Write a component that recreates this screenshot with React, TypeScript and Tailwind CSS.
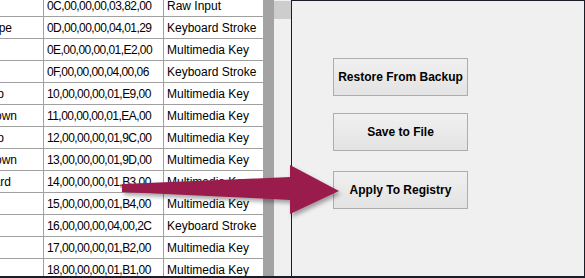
import React from "react";

type Row = { label: string; pad: string; hex: string; type: string };

const rows: Row[] = [
  { label: "", pad: "", hex: "0C,00,00,00,03,82,00", type: "Raw Input" },
  { label: "Escape", pad: "pr-[31px]", hex: "0D,00,00,00,04,01,29", type: "Keyboard Stroke" },
  { label: "", pad: "", hex: "0E,00,00,00,01,E2,00", type: "Multimedia Key" },
  { label: "", pad: "", hex: "0F,00,00,00,04,00,06", type: "Keyboard Stroke" },
  { label: "Volume Up", pad: "pr-[39px]", hex: "10,00,00,00,01,E9,00", type: "Multimedia Key" },
  { label: "Volume Down", pad: "pr-[26px]", hex: "11,00,00,00,01,EA,00", type: "Multimedia Key" },
  { label: "Channel Up", pad: "pr-[39px]", hex: "12,00,00,00,01,9C,00", type: "Multimedia Key" },
  { label: "Channel Down", pad: "pr-[26px]", hex: "13,00,00,00,01,9D,00", type: "Multimedia Key" },
  { label: "Fast Forward", pad: "pr-[32px]", hex: "14,00,00,00,01,B3,00", type: "Multimedia Key" },
  { label: "", pad: "", hex: "15,00,00,00,01,B4,00", type: "Multimedia Key" },
  { label: "", pad: "", hex: "16,00,00,00,04,00,2C", type: "Keyboard Stroke" },
  { label: "", pad: "", hex: "17,00,00,00,01,B2,00", type: "Multimedia Key" },
  { label: "", pad: "", hex: "18,00,00,00,01,B1,00", type: "Multimedia Key" },
];

function Btn({ children, className }: { children: React.ReactNode; className?: string }) {
  return (
    <div
      className={
        "w-[135px] h-[38px] flex items-center justify-center border border-[#adadad] bg-gradient-to-b from-[#f0f0f0] to-[#e3e3e3] text-[12px] font-bold text-black " +
        (className ?? "")
      }
    >
      {children}
    </div>
  );
}

export default function App() {
  return (
    <div
      className="relative w-[585px] h-[278px] overflow-hidden bg-white"
      style={{ fontFamily: '"Liberation Sans", Arial, sans-serif' }}
    >
      <div className="flex h-[276px]">
        {/* table */}
        <div className="w-[263px] h-full overflow-hidden bg-white">
          <div className="-mt-[5px]">
            {rows.map((r, i) => (
              <div key={i} className="flex h-[22px] border-b border-[#a0a0a0] text-[12px] text-black">
                <div className="w-[44px] shrink-0 border-r border-[#a0a0a0] flex items-center justify-end overflow-hidden">
                  <span className={"whitespace-nowrap " + r.pad}>{r.label}</span>
                </div>
                <div className="w-[120px] shrink-0 border-r border-[#a0a0a0] flex items-center pl-[3px] tracking-[-0.55px] whitespace-nowrap">
                  {r.hex}
                </div>
                <div className="w-[99px] shrink-0 flex items-center pl-[3px] whitespace-nowrap">{r.type}</div>
              </div>
            ))}
          </div>
        </div>
        {/* gray empty strip */}
        <div className="w-[11px] h-full bg-[#a3a3a3]" />
        {/* scrollbar */}
        <div className="w-[17px] h-full bg-[#f0f0f0] flex flex-col">
          <div className="mt-[1px] h-[18px] bg-[#cdcdcd]" />
        </div>
        <div className="w-[1px] h-full bg-[#1c1c28]" />
        {/* right panel */}
        <div className="w-[292px] h-full bg-[#f0f0f0] border-t border-[#1c1c28] flex flex-col pl-[41px] pt-[57px]">
          <Btn>Restore From Backup</Btn>
          <Btn className="mt-[17px]">Save to File</Btn>
          <Btn className="mt-[20px]">Apply To Registry</Btn>
        </div>
        <div className="w-[1px] h-full bg-[#1c1c28]" />
      </div>
      <div className="h-[2px] bg-[#1c1c28]" />

      {/* arrow overlay */}
      <svg
        className="absolute left-0 top-0 pointer-events-none"
        width="585"
        height="278"
        viewBox="0 0 585 278"
      >
        <defs>
          <filter id="sh" x="-10%" y="-30%" width="130%" height="180%">
            <feDropShadow dx="2" dy="3" stdDeviation="2" floodColor="#000" floodOpacity="0.35" />
          </filter>
        </defs>
        <path
          d="M122,184 L290,177 L290,165 L339,191 L290,214 L290,200 L122,192 Z"
          fill="#9a1f4e"
          filter="url(#sh)"
        />
      </svg>
    </div>
  );
}
